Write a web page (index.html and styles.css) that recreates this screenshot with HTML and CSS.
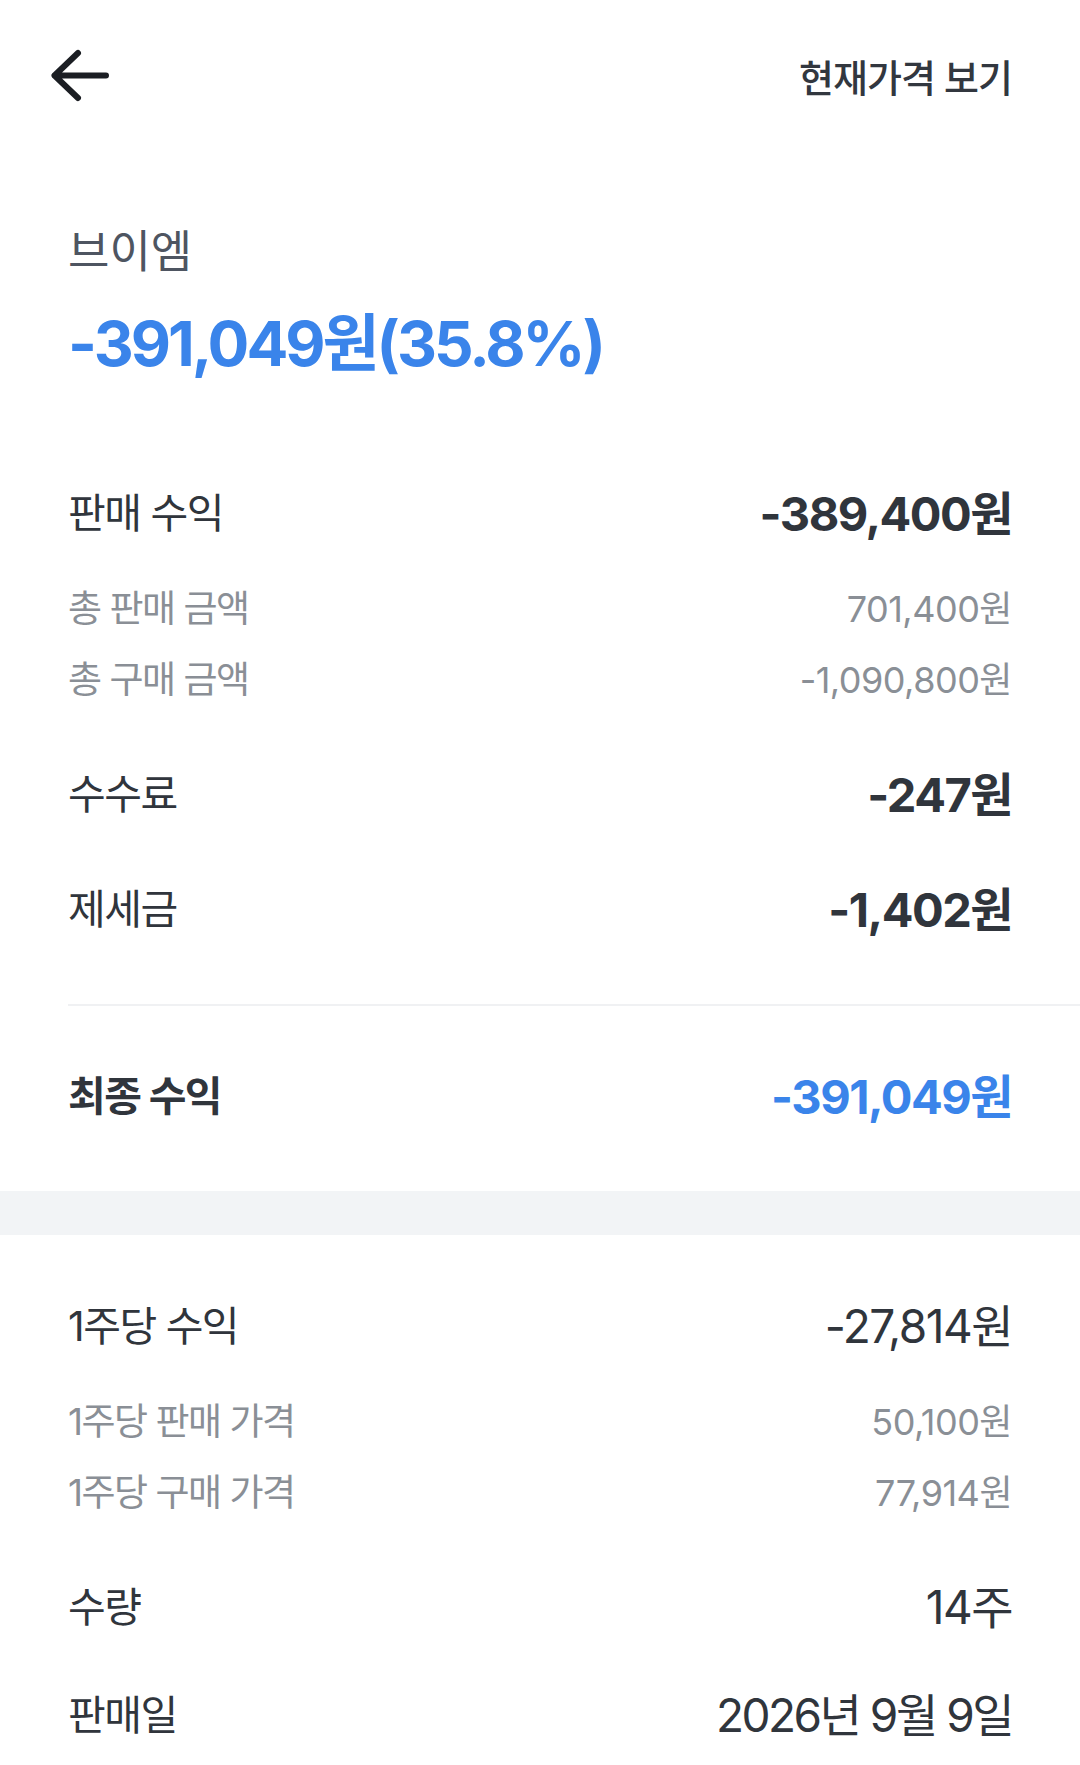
FILE: index.html
```html
<!DOCTYPE html>
<html lang="ko">
<head>
    <meta charset="UTF-8">
    <meta name="viewport" content="width=device-width, initial-scale=1.0">
    <title>판매 수익 상세</title>
    <link rel="stylesheet" href="styles.css">
</head>
<body>
    <header class="topbar">
        <button class="back-btn" aria-label="뒤로">
            <svg width="60" height="60" viewBox="0 0 60 60" fill="none">
                <path d="M28 8 L4.5 30.5 L28 53 M4.5 30.5 H56" stroke="#1b1e23" stroke-width="6" stroke-linecap="round" stroke-linejoin="round"/>
            </svg>
        </button>
        <a class="price-link" href="#">현재가격 보기</a>
    </header>

    <section class="summary">
        <p class="stock-name">브이엠</p>
        <p class="total-profit">-391,049원(35.8%)</p>
    </section>

    <section class="breakdown">
        <div class="row">
            <span class="label">판매 수익</span>
            <span class="value strong">-389,400원</span>
        </div>
        <div class="sub-list">
            <div class="sub-row">
                <span class="sub-label">총 판매 금액</span>
                <span class="sub-value">701,400원</span>
            </div>
            <div class="sub-row">
                <span class="sub-label">총 구매 금액</span>
                <span class="sub-value">-1,090,800원</span>
            </div>
        </div>
        <div class="row spaced">
            <span class="label">수수료</span>
            <span class="value strong">-247원</span>
        </div>
        <div class="row spaced">
            <span class="label">제세금</span>
            <span class="value strong">-1,402원</span>
        </div>
    </section>

    <div class="divider"></div>

    <section class="final">
        <div class="row">
            <span class="label bold">최종 수익</span>
            <span class="value strong blue">-391,049원</span>
        </div>
    </section>

    <div class="band"></div>

    <section class="per-share">
        <div class="row">
            <span class="label">1주당 수익</span>
            <span class="value">-27,814원</span>
        </div>
        <div class="sub-list">
            <div class="sub-row">
                <span class="sub-label">1주당 판매 가격</span>
                <span class="sub-value">50,100원</span>
            </div>
            <div class="sub-row">
                <span class="sub-label">1주당 구매 가격</span>
                <span class="sub-value">77,914원</span>
            </div>
        </div>
        <div class="row spaced">
            <span class="label">수량</span>
            <span class="value">14주</span>
        </div>
        <div class="row last">
            <span class="label">판매일</span>
            <span class="value date">2026년 9월 9일</span>
        </div>
    </section>
</body>
</html>
```

FILE: styles.css
```css
body {
    margin: 0;
    background: #ffffff;
    font-family: Inter, "Noto Sans CJK KR", sans-serif;
    color: #30353c;
}
p {
    margin: 0;
}
.topbar {
    height: 150px;
    padding: 0 68px 0 50px;
    display: flex;
    align-items: center;
    justify-content: space-between;
}
.back-btn {
    width: 60px;
    height: 60px;
    padding: 0;
    border: none;
    background: none;
    cursor: pointer;
}
.back-btn svg {
    display: block;
}
.price-link {
    font-size: 38px;
    font-weight: 500;
    letter-spacing: -1px;
    color: #32373f;
    text-decoration: none;
}
.summary {
    padding: 73px 68px 0;
}
.stock-name {
    font-size: 45px;
    line-height: 58px;
    color: #4e5561;
}
.total-profit {
    margin-top: 23px;
    font-size: 62px;
    line-height: 80px;
    font-weight: 700;
    letter-spacing: -3px;
    color: #3a84ea;
}
.breakdown {
    padding: 90px 68px 62px 68px;
}
.row {
    height: 72px;
    display: flex;
    align-items: center;
    justify-content: space-between;
}
.row.spaced {
    margin-top: 43px;
}
.row.last {
    margin-top: 36px;
}
.label {
    font-size: 41px;
    letter-spacing: -1.5px;
    color: #30353c;
}
.label.bold {
    font-weight: 700;
}
.value {
    font-size: 46px;
    letter-spacing: -1.5px;
    color: #30353c;
}
.value.date {
    letter-spacing: -2.5px;
}
.value.strong {
    font-size: 47px;
    font-weight: 700;
    letter-spacing: -1.5px;
}
.value.blue {
    color: #3a84ea;
}
.sub-list {
    margin-top: 24px;
}
.sub-row {
    height: 71px;
    display: flex;
    align-items: center;
    justify-content: space-between;
    font-size: 37px;
    color: #8a8f96;
}
.sub-label {
    letter-spacing: -1.5px;
}
.sub-value {
    font-size: 36px;
    letter-spacing: -0.5px;
}
.divider {
    margin-left: 68px;
    height: 2px;
    background: #f0f1f3;
}
.final {
    padding: 51px 68px 62px 68px;
}
.band {
    height: 44px;
    background: #f2f4f6;
}
.per-share {
    padding: 52px 68px 0 68px;
}
```
